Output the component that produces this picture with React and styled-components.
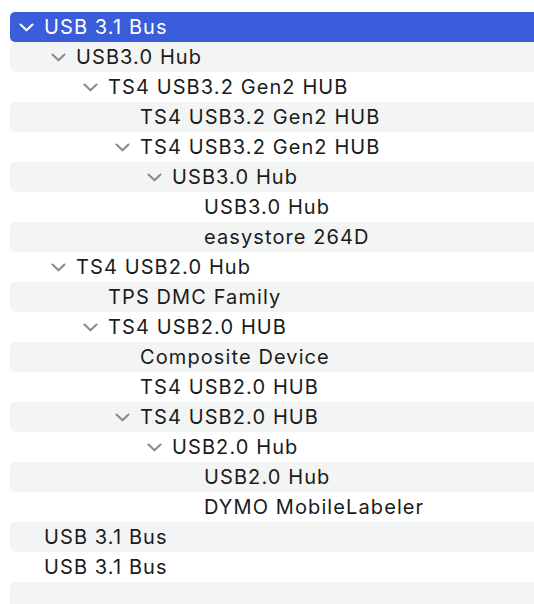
import React from "react";
import styled, { createGlobalStyle } from "styled-components";

const Global = createGlobalStyle`
  html, body { margin: 0; padding: 0; background: #ffffff; overflow: hidden; }
  body { font-family: Inter, "Noto Sans", "DejaVu Sans", sans-serif; }
`;

const Outline = styled.div`
  display: flex;
  flex-direction: column;
  padding-top: 12px;
  width: 534px;
  height: 604px;
  overflow: hidden;
`;

const Row = styled.div`
  display: flex;
  align-items: center;
  flex: 0 0 30px;
  height: 30px;
  margin-left: 10px;
  padding-left: ${(p) => 8 + p.$level * 32}px;
  border-radius: 5px 0 0 5px;
  background: ${(p) => (p.$selected ? "#395ddb" : p.$striped ? "#f3f4f4" : "transparent")};
  color: ${(p) => (p.$selected ? "#ffffff" : "#1b1b1b")};
`;

const Disclosure = styled.span`
  display: flex;
  align-items: center;
  justify-content: center;
  width: 16px;
  height: 30px;
  margin-right: 10px;
  color: ${(p) => (p.$selected ? "#ffffff" : "#8a8a8a")};
`;

const Label = styled.span`
  font-size: 20px;
  letter-spacing: 1.1px;
  line-height: 30px;
  white-space: nowrap;
`;

const Chevron = () => (
  <svg width="15" height="9" viewBox="0 0 15 9" fill="none">
    <path d="M1.5 1.5 L7.5 7.3 L13.5 1.5" stroke="currentColor" strokeWidth="2.1" strokeLinecap="round" strokeLinejoin="round" />
  </svg>
);

const items = [
  { l: 0, t: "USB 3.1 Bus", open: true, sel: true },
  { l: 1, t: "USB3.0 Hub", open: true },
  { l: 2, t: "TS4 USB3.2 Gen2 HUB", open: true },
  { l: 3, t: "TS4 USB3.2 Gen2 HUB" },
  { l: 3, t: "TS4 USB3.2 Gen2 HUB", open: true },
  { l: 4, t: "USB3.0 Hub", open: true },
  { l: 5, t: "USB3.0 Hub" },
  { l: 5, t: "easystore 264D" },
  { l: 1, t: "TS4 USB2.0 Hub", open: true },
  { l: 2, t: "TPS DMC Family" },
  { l: 2, t: "TS4 USB2.0 HUB", open: true },
  { l: 3, t: "Composite Device" },
  { l: 3, t: "TS4 USB2.0 HUB" },
  { l: 3, t: "TS4 USB2.0 HUB", open: true },
  { l: 4, t: "USB2.0 Hub", open: true },
  { l: 5, t: "USB2.0 Hub" },
  { l: 5, t: "DYMO MobileLabeler" },
  { l: 0, t: "USB 3.1 Bus" },
  { l: 0, t: "USB 3.1 Bus" },
  { l: 0, t: "" },
];

export default function App() {
  return (
    <>
      <Global />
      <Outline>
        {items.map((it, i) => (
          <Row key={i} $level={it.l} $selected={it.sel} $striped={i % 2 === 1}>
            <Disclosure $selected={it.sel}>{it.open ? <Chevron /> : null}</Disclosure>
            <Label>{it.t}</Label>
          </Row>
        ))}
      </Outline>
    </>
  );
}
